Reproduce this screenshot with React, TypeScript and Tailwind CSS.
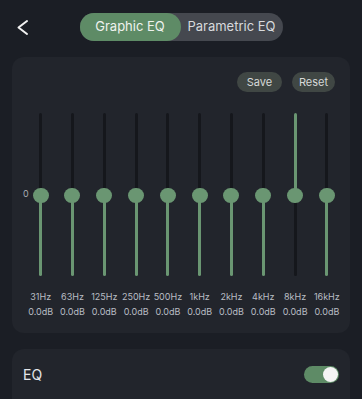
import React from "react";

const bands = [
  { f: "31Hz", inv: false },
  { f: "63Hz", inv: false },
  { f: "125Hz", inv: false },
  { f: "250Hz", inv: false },
  { f: "500Hz", inv: false },
  { f: "1kHz", inv: false },
  { f: "2kHz", inv: false },
  { f: "4kHz", inv: false },
  { f: "8kHz", inv: true },
  { f: "16kHz", inv: false },
];

export default function App() {
  return (
    <div
      className="w-[362px] h-[399px] overflow-hidden bg-[#1b1e25] text-white"
      style={{ fontFamily: "Inter, 'Noto Sans', sans-serif" }}
    >
      {/* Header */}
      <div className="relative h-[57px] flex justify-center pt-[13px]">
        <svg
          className="absolute left-[16px] top-[19px]"
          width="14"
          height="17"
          viewBox="0 0 14 17"
          fill="none"
        >
          <polyline
            points="11,2 2.5,8.5 11,15"
            stroke="#f2f2f2"
            strokeWidth="2"
            strokeLinecap="round"
            strokeLinejoin="round"
          />
        </svg>
        <div className="flex h-[28px] w-[203px] rounded-full bg-[#45484f]">
          <div className="flex w-[101px] items-center justify-center rounded-full bg-[#5e8b66] text-[13px] text-[#eef2ee]">
            Graphic EQ
          </div>
          <div className="flex flex-1 items-center justify-center text-[13px] text-[#d8dadd]">
            Parametric EQ
          </div>
        </div>
      </div>

      {/* EQ panel */}
      <div className="relative mx-[12px] h-[276px] rounded-[12px] bg-[#22252c]">
        <div className="flex justify-end gap-[10px] pt-[15px] pr-[15px]">
          <div className="flex h-[20px] w-[45px] items-center justify-center rounded-full bg-[#404744] text-[11px] text-[#d6d9d8]">
            Save
          </div>
          <div className="flex h-[20px] w-[43px] items-center justify-center rounded-full bg-[#404744] text-[11px] text-[#d6d9d8]">
            Reset
          </div>
        </div>
        <div className="absolute left-[11px] top-[131px] text-[9px] leading-[12px] text-[#a8acb3]">
          0
        </div>
        <div className="mt-[21px] ml-[12.8px] grid grid-cols-[repeat(10,31.8px)]">
          {bands.map((b) => (
            <div key={b.f} className="flex flex-col items-center">
              <div className="relative h-[163px] w-[16px] flex justify-center">
                <div className="flex h-full w-[3px] flex-col">
                  <div
                    className={
                      b.inv
                        ? "h-[82px] rounded-t-full bg-[#6a9672]"
                        : "h-[82px] rounded-t-full bg-[#15171c]"
                    }
                  />
                  <div
                    className={
                      b.inv
                        ? "flex-1 rounded-b-full bg-[#15171c]"
                        : "flex-1 rounded-b-full bg-[#6a9672]"
                    }
                  />
                </div>
                <div className="absolute left-0 top-[74.5px] h-[15px] w-[16px] rounded-full bg-[#6a9672]" />
              </div>
              <div className="mt-[15px] text-[9px] leading-[12px] text-[#b9bdc4] whitespace-nowrap">
                {b.f}
              </div>
              <div className="mt-[3px] text-[9px] leading-[12px] text-[#b9bdc4] whitespace-nowrap">
                0.0dB
              </div>
            </div>
          ))}
        </div>
      </div>

      {/* EQ toggle panel */}
      <div className="mx-[12px] mt-[16px] flex h-[50px] items-center justify-between rounded-t-[12px] bg-[#22252c] pl-[11px] pr-[11px]">
        <span className="text-[14px] text-[#e4e6e9]">EQ</span>
        <div className="flex h-[17px] w-[35px] items-center justify-end rounded-full bg-[#5e8b66] pr-[1px]">
          <div className="h-[15px] w-[15px] rounded-full bg-[#f4f4f4]" />
        </div>
      </div>
    </div>
  );
}
